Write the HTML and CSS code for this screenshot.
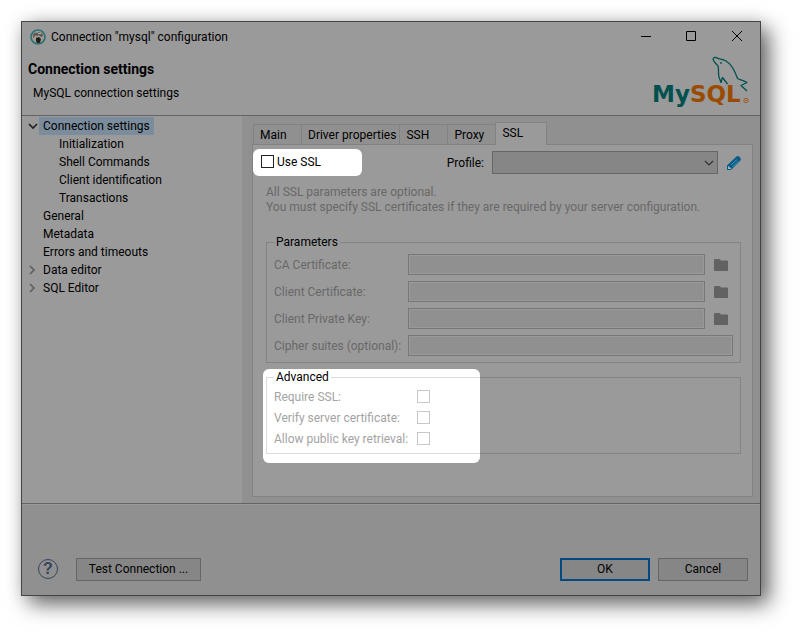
FILE: index.html
```html
<!DOCTYPE html>
<html lang="en">
<head>
<meta charset="utf-8">
<meta name="viewport" content="width=device-width, initial-scale=1">
<title>Connection "mysql" configuration</title>
<link rel="stylesheet" href="styles.css">
</head>
<body>
<svg class="defs" width="0" height="0" aria-hidden="true">
  <symbol id="folder" viewBox="0 0 14 12"><path d="M0 1Q0 0 1 0H5.500L7 1.500H13Q14 1.500 14 2.500V11Q14 12 13 12H1Q0 12 0 11Z" fill="#626262"/></symbol>
  <symbol id="chevron-right" viewBox="0 0 8 10"><path d="M2 1L6 5L2 9" fill="none" stroke="#5f5f5f" stroke-width="1.700"/></symbol>
</svg>
<main class="window">
  <header class="titlebar">
    <svg class="app-icon" viewBox="0 0 16 16" aria-hidden="true">
      <circle cx="8" cy="8" r="7" fill="#a09a94" stroke="#2d7373" stroke-width="1.700"/>
      <path d="M3 6Q4 3 7 4L9 3Q13 4 13 7L11 8L9 6L7 7L5 6L4 9L3 8Z" fill="#5d5751"/>
      <path d="M6 9L9 8L11 10L10 14L7 14L6 12Z" fill="#241e1b"/>
      <path d="M8 4H11V5H8Z" fill="#c3bfba"/>
    </svg>
    <span class="title">Connection "mysql" configuration</span>
    <button class="caption" type="button" aria-label="Minimize"><svg viewBox="0 0 12 12"><path d="M2 5.500H12" /></svg></button>
    <button class="caption" type="button" aria-label="Maximize"><svg viewBox="0 0 12 12"><path d="M1.500 .5H10.500V9.500H1.500Z" /></svg></button>
    <button class="caption" type="button" aria-label="Close"><svg viewBox="0 0 12 12"><path d="M1 0L11 10M11 0L1 10" /></svg></button>
  </header>
  <section class="banner">
    <div>
      <h1>Connection settings</h1>
      <p>MySQL connection settings</p>
    </div>
    <svg class="logo" viewBox="0 0 100 54" role="img" aria-label="MySQL">
      <g fill="none" stroke="#00504f" stroke-width="1.300" stroke-linejoin="round">
        <path d="M95 36L89 30.500L95 27.500C92 25.500 88 25 85.500 23.500C83 17 80.500 10 74 6C70 3.500 67 4.500 64 2.500C61.500 2 60.500 4 61.500 5.500C62.500 8 65 9 66 11C67 14 66 18 67 22L69 27.500L70.500 22.500L75.500 29"/>
        <path d="M69 7V9"/>
      </g>
      <text class="logo-text" x="0" y="47"><tspan fill="#00504f">My</tspan><tspan fill="#9a4b00">SQL</tspan></text>
      <circle cx="94" cy="45.500" r="2.200" fill="none" stroke="#9a4b00" stroke-width=".8"/>
      <circle cx="94" cy="45.500" r=".7" fill="#9a4b00"/>
    </svg>
  </section>
  <div class="content">
    <nav class="tree" aria-label="Pages">
      <ul>
        <li class="root"><svg class="twist open" viewBox="0 0 10 8" aria-hidden="true"><path d="M1 2L5 6L9 2" fill="none" stroke="#222" stroke-width="1.700"/></svg><a class="selected" href="#">Connection settings</a></li>
        <li class="child"><a href="#">Initialization</a></li>
        <li class="child"><a href="#">Shell Commands</a></li>
        <li class="child"><a href="#">Client identification</a></li>
        <li class="child"><a href="#">Transactions</a></li>
        <li class="leaf"><a href="#">General</a></li>
        <li class="leaf"><a href="#">Metadata</a></li>
        <li class="leaf"><a href="#">Errors and timeouts</a></li>
        <li class="root"><svg class="twist" aria-hidden="true"><use href="#chevron-right"/></svg><a href="#">Data editor</a></li>
        <li class="root"><svg class="twist" aria-hidden="true"><use href="#chevron-right"/></svg><a href="#">SQL Editor</a></li>
      </ul>
    </nav>
    <section class="page">
      <div class="tabs" role="tablist">
        <button class="tab" type="button" role="tab">Main</button>
        <button class="tab long" type="button" role="tab">Driver properties</button>
        <button class="tab" type="button" role="tab">SSH</button>
        <button class="tab" type="button" role="tab">Proxy</button>
        <button class="tab active" type="button" role="tab" aria-selected="true">SSL</button>
      </div>
      <div class="panel">
        <div class="top-row">
          <label class="use-ssl"><input type="checkbox"><span>Use SSL</span></label>
          <label class="profile-label" for="profile">Profile:</label>
          <div class="combo">
            <select id="profile"><option></option></select>
            <svg viewBox="0 0 10 6" aria-hidden="true"><path d="M1 1L5 5L9 1" fill="none" stroke="#303030" stroke-width="1.200"/></svg>
          </div>
          <button class="edit" type="button" aria-label="Edit profile">
            <svg viewBox="0 0 16 16"><path d="M1 15V10.500L10.500 1.500Q12 .5 13.500 2L14.500 3Q15.500 4.500 14 6L5 15Z" fill="#055b86"/><path d="M2.500 11L5.500 13.800L4.800 14H2V11.500Z" fill="#a5b2b8"/><path d="M5 10L11 4.500M6.500 12L12.500 6" stroke="#4d95b5" fill="none"/></svg>
          </button>
        </div>
        <p class="hint">All SSL parameters are optional.<br>You must specify SSL certificates if they are required by your server configuration.</p>
        <fieldset class="group params">
          <legend>Parameters</legend>
          <label for="ca">CA Certificate:</label><input id="ca" type="text" disabled><button type="button" disabled aria-label="Browse CA certificate"><svg><use href="#folder"/></svg></button>
          <label for="cert">Client Certificate:</label><input id="cert" type="text" disabled><button type="button" disabled aria-label="Browse client certificate"><svg><use href="#folder"/></svg></button>
          <label for="key">Client Private Key:</label><input id="key" type="text" disabled><button type="button" disabled aria-label="Browse client key"><svg><use href="#folder"/></svg></button>
          <label for="cipher">Cipher suites (optional):</label><input class="wide" id="cipher" type="text" disabled>
        </fieldset>
        <div class="advanced">
          <div class="spotlight"></div>
          <fieldset class="group checks">
            <legend>Advanced</legend>
            <label for="require">Require SSL:</label><input id="require" type="checkbox" disabled>
            <label for="verify">Verify server certificate:</label><input id="verify" type="checkbox" disabled>
            <label for="allow">Allow public key retrieval:</label><input id="allow" type="checkbox" disabled>
          </fieldset>
        </div>
      </div>
    </section>
  </div>
  <footer class="footer">
    <button class="help" type="button" aria-label="Help">?</button>
    <button class="btn test" type="button">Test Connection ...</button>
    <button class="btn primary" type="button">OK</button>
    <button class="btn" type="button">Cancel</button>
  </footer>
</main>
</body>
</html>
```
FILE: styles.css
```css
* { box-sizing: border-box; }

body {
  margin: 0;
  padding: 21px 42px 42px 21px;
  min-height: 100vh;
  display: flex;
  background: #fff;
  color: #000;
  font: 12px/16px Roboto, "Open Sans", sans-serif;
}

button, input, select { font: inherit; color: inherit; margin: 0; }
button { padding: 0; border: 0; background: none; }
h1, p, ul { margin: 0; padding: 0; }
svg { display: block; }
.defs { position: absolute; }

.window {
  flex: 1;
  min-width: 0;
  display: flex;
  flex-direction: column;
  background: #9a9a9a;
  border: 1px solid #444;
  box-shadow: 8px 8px 20px rgba(0, 0, 0, .6), 0 0 16px rgba(0, 0, 0, .1);
}

/* Title bar and banner */
.titlebar { display: flex; align-items: center; height: 30px; padding-left: 8px; }
.app-icon { width: 16px; height: 16px; margin-right: 5px; }
.title { flex: 1; }
.caption { width: 46px; height: 30px; display: grid; place-items: center; }
.caption svg { width: 12px; height: 12px; fill: none; stroke: #000; stroke-width: 1; }

.banner {
  display: flex;
  justify-content: space-between;
  height: 64px;
  padding: 0 8px 0 6px;
  border-bottom: 1px solid #646464;
}
.banner h1 { margin-top: 9px; font-size: 14px; line-height: 16px; }
.banner p { margin: 8px 0 0 5px; }
.logo { width: 100px; height: 54px; margin-top: 3px; }
.logo-text { font: bold 23px "DejaVu Sans", sans-serif; }

/* Body */
.content { flex: 1; display: flex; border-bottom: 1px solid #646464; }
.tree { flex: 0 0 220px; padding-top: 1px; }
.tree ul { list-style: none; }
.tree li { display: flex; align-items: center; height: 18px; }
.tree a { padding: 0 4px; line-height: 18px; color: inherit; text-decoration: none; }
.tree .selected { background: #7b8d9c; }
.root { padding-left: 6px; }
.leaf { padding-left: 17px; }
.child { padding-left: 33px; }
.twist { width: 8px; height: 10px; margin-right: 3px; }
.twist.open { width: 10px; height: 8px; margin-right: 1px; }

.page { flex: 1; min-width: 0; display: flex; flex-direction: column; padding: 6px 7px 6px 10px; background: #909090; }
.tabs { display: flex; align-items: flex-end; padding-left: 1px; height: 23px; margin-bottom: -1px; z-index: 1; }
.tab {
  flex: 0 0 auto;
  height: 21px;
  padding: 0 3px 0 6px;
  min-width: 48px;
  text-align: left;
  border: 1px solid #828282;
  border-right: 0;
  background: #909090;
}
.tab.long { min-width: 98px; }
.tab.active { height: 23px; min-width: 52px; padding-bottom: 2px; border-right: 1px solid #828282; border-bottom: 0; background: #9a9a9a; }
.panel { flex: 1; border: 1px solid #828282; background: #9a9a9a; }

.top-row { display: flex; align-items: center; height: 27px; margin-top: 4px; }
.use-ssl { display: flex; align-items: center; gap: 3px; width: 109px; height: 27px; padding-left: 8px; padding-bottom: 2px; border-radius: 6px; background: #fff; }
.profile-label { flex: 0 0 122px; text-align: right; margin-right: 8px; }
.combo { position: relative; flex: 1; height: 23px; }
.combo select { appearance: none; width: 100%; height: 23px; border: 1px solid #666; border-radius: 0; background: #868686; }
.combo svg { position: absolute; right: 4px; top: 9px; width: 10px; height: 6px; }
.edit { margin: 0 10px 0 8px; }
.edit svg { width: 16px; height: 16px; }

input[type="checkbox"] { appearance: none; width: 13px; height: 13px; border: 1px solid #222; background: #fff; }
.hint { margin: 9px 13px 0; line-height: 15px; color: #686868; }

.group { margin: 0 11px 0 13px; min-width: 0; border: 1px solid rgba(0, 0, 0, .14); }
.group legend { padding: 0 2px; margin: 0; line-height: 16px; }
.group label { color: #686868; white-space: nowrap; }
.params {
  display: grid;
  grid-template-columns: 134px 1fr 28px;
  grid-auto-rows: 21px;
  row-gap: 6px;
  align-items: center;
  margin-top: 19px;
  padding: 4px 7px 6px;
}
.params input { width: 100%; height: 21px; border: 1px solid #777; border-radius: 0; background: #909090; box-shadow: inset 0 0 0 1px #9a9a9a; }
.params .wide { grid-column: span 2; }
.params button { justify-self: center; padding-left: 4px; }
.params svg { width: 14px; height: 12px; }

.advanced { position: relative; z-index: 0; margin-top: 6px; }
.spotlight { position: absolute; z-index: -1; left: 10px; top: 0; width: 217px; height: 94px; border-radius: 6px; background: #fff; }
.checks { display: grid; grid-template-columns: 143px 13px; grid-auto-rows: 21px; align-items: center; padding: 1px 7px 4px; }
.checks label { color: #a3a3a3; }
.checks input[type="checkbox"] { border-color: #c8c8c8; }

/* Footer */
.footer { display: flex; align-items: center; gap: 8px; height: 91px; padding: 38px 12px 0 16px; background: #909090; border-top: 1px solid #9a9a9a; }
.help { width: 20px; height: 20px; margin-right: 10px; border: 1px solid #35435a; border-radius: 50%; color: #35435a; font: bold 16px/18px "Liberation Sans", sans-serif; }
.btn { width: 90px; height: 23px; border: 1px solid #666; background: #868686; }
.test { width: 125px; margin-right: auto; }
.primary { border: 2px solid #004a83; }
```
